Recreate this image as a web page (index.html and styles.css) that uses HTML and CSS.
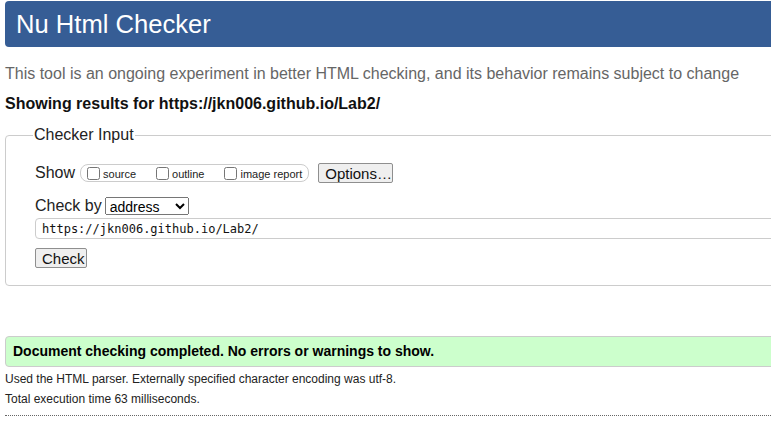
FILE: index.html
```html
<!DOCTYPE html>
<html lang="en">
<head>
<meta charset="utf-8">
<title>Nu Html Checker</title>
<link rel="stylesheet" href="styles.css">
</head>
<body>
<div class="page">
  <h1 class="title">Nu Html Checker</h1>
  <p class="intro">This tool is an ongoing experiment in better HTML checking, and its behavior remains subject to change</p>
  <p class="showing">Showing results for https://jkn006.github.io/Lab2/</p>
  <fieldset class="checker">
    <legend class="legend">Checker Input</legend>
    <div class="row show-row">
      <span class="label">Show</span>
      <span class="opts">
        <label class="opt"><input type="checkbox" class="cb"><span>source</span></label>
        <label class="opt"><input type="checkbox" class="cb"><span>outline</span></label>
        <label class="opt"><input type="checkbox" class="cb"><span>image report</span></label>
      </span>
      <button class="btn options">Options…</button>
    </div>
    <div class="row by-row">
      <span class="label">Check by</span>
      <select class="sel"><option>address</option></select>
    </div>
    <input class="url" type="text" value="https://jkn006.github.io/Lab2/">
    <div class="row">
      <button class="btn check">Check</button>
    </div>
  </fieldset>
  <p class="success">Document checking completed. No errors or warnings to show.</p>
  <p class="details">Used the HTML parser. Externally specified character encoding was utf-8.</p>
  <p class="details">Total execution time 63 milliseconds.</p>
  <hr class="dots">
</div>
</body>
</html>
```
FILE: styles.css
```css
html, body {
  margin: 0;
  padding: 0;
  background: #fff;
  overflow: hidden;
}
body {
  font-family: "Liberation Sans", Arial, sans-serif;
  color: #222;
}
.page {
  width: 1100px;
  padding: 1px 0 0 5px;
}
.title {
  margin: 0;
  height: 46px;
  box-sizing: border-box;
  background: #365d95;
  color: #fff;
  border-radius: 4px;
  font-weight: normal;
  font-size: 25.6px;
  line-height: 46px;
  padding: 0 11px;
}
.intro {
  margin: 18px 0 0;
  font-size: 16px;
  line-height: 18px;
  color: #666;
}
.showing {
  margin: 12px 0 0;
  font-size: 16px;
  line-height: 18px;
  font-weight: bold;
  color: #111;
}
.checker {
  margin: 13px 0 0;
  border: 1px solid #ccc;
  border-radius: 4px;
  padding: 19px 0 17px 29px;
}
.legend {
  font-size: 16px;
  padding: 0 1px;
  margin-left: -2px;
  color: #222;
}
.row {
  display: flex;
  align-items: center;
}
.label {
  font-size: 16px;
  color: #222;
}
.show-row {
  height: 20px;
}
.opts {
  display: flex;
  align-items: center;
  margin-left: 5px;
  height: 18px;
  border: 1px solid #ccc;
  border-radius: 8px;
  box-sizing: border-box;
  padding: 0 6px;
  white-space: nowrap;
}
.opt {
  display: flex;
  align-items: flex-end;
  font-size: 11px;
  line-height: 13px;
  color: #222;
  margin-right: 20px;
  white-space: nowrap;
}
.opt span {
  position: relative;
  top: 1px;
}
.opt:last-child {
  margin-right: 0;
}
.cb {
  margin: 0 3px 0 0;
  width: 13px;
  height: 13px;
}
.btn {
  font-family: "Liberation Sans", Arial, sans-serif;
  font-size: 15px;
  color: #111;
  background: #efefef;
  border: 1px solid #8f8f8f;
  border-radius: 2px;
  padding: 0 6px;
  height: 20px;
}
.options {
  margin-left: 9px;
  width: 75px;
}
.by-row {
  margin-top: 14px;
  height: 18px;
}
.sel {
  margin-left: 3px;
  width: 84px;
  height: 18px;
  font-family: "Liberation Sans", Arial, sans-serif;
  font-size: 14px;
  padding: 0;
}
.url {
  display: block;
  margin: 3px 0 0;
  width: 900px;
  height: 21px;
  box-sizing: border-box;
  border: 1px solid #ccc;
  border-radius: 4px;
  padding: 0 6px;
  font-family: "DejaVu Sans Mono", monospace;
  font-size: 12px;
  color: #111;
}
.check {
  margin-top: 9px;
  width: 52px;
}
.success {
  margin: 50px 0 0;
  background: #cfc;
  border: 1px solid #ccc;
  border-radius: 4px;
  height: 31px;
  box-sizing: border-box;
  padding: 0 0 0 7px;
  font-weight: bold;
  font-size: 14px;
  line-height: 29px;
  color: #000;
}
.details {
  margin: 4px 0 0;
  font-size: 12px;
  line-height: 16px;
  color: #222;
}
.details + .details {
  margin-top: 4px;
}
.dots {
  margin: 8px 0 0;
  border: 0;
  border-top: 1px dotted #666;
  height: 0;
}
```
